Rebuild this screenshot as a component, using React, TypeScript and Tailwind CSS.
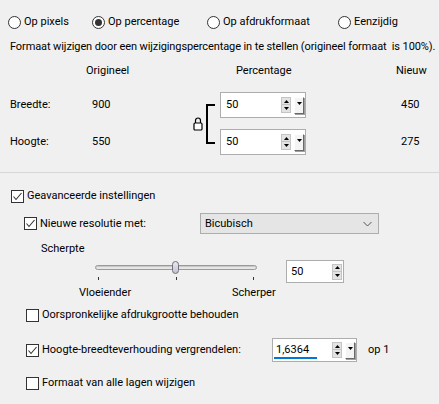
import React from 'react';

const Tri = ({ down }: { down?: boolean }) => (
  <svg width="5" height="3" viewBox="0 0 5 3">
    <path d={down ? 'M0 0H5L2.5 3Z' : 'M0 3H5L2.5 0Z'} fill="#000" />
  </svg>
);

const Radio = ({ label, checked, w }: { label: string; checked?: boolean; w: string }) => (
  <div className={`flex items-center ${w}`}>
    <span className="w-[13px] h-[13px] rounded-full border border-[#333] bg-white flex items-center justify-center">
      {checked && <span className="w-[7px] h-[7px] rounded-full bg-[#333]" />}
    </span>
    <span className="ml-[3px]">{label}</span>
  </div>
);

const Check = ({ label, checked }: { label: string; checked?: boolean }) => (
  <div className="flex items-center h-[14px]">
    <span className="w-[13px] h-[13px] border border-[#333] bg-white flex items-center justify-center">
      {checked && (
        <svg width="11" height="11" viewBox="0 0 11 11">
          <path d="M1.5 5.5L4 8.5L9.5 2" stroke="#333" strokeWidth="1.1" fill="none" />
        </svg>
      )}
    </span>
    <span className="ml-[3px]">{label}</span>
  </div>
);

// small up/down pair plus optional drop button
const Spinner = ({ drop = true }: { drop?: boolean }) => (
  <div className="flex items-center gap-[3px]">
    <div className="flex flex-col w-[10px]">
      <div className="h-[8px] bg-[#e3e3e3] border border-[#c4c4c4] flex items-center justify-center"><Tri /></div>
      <div className="h-[8px] bg-[#e3e3e3] border border-t-0 border-[#c4c4c4] flex items-center justify-center"><Tri down /></div>
    </div>
    {drop && (
      <div className="w-[10px] h-[17px] bg-[#f4f4f4] border border-t-[#fff] border-l-[#fff] border-r-[#696969] border-b-[#696969] shadow-[1px_1px_0_#a0a0a0] flex justify-center pt-[4px]">
        <Tri down />
      </div>
    )}
  </div>
);

const App: React.FC = () => {
  return (
    <div className="w-[439px] h-[404px] bg-[#f0f0f0] text-black text-[11px] leading-[14px] font-['Roboto',sans-serif] overflow-hidden">
      {/* mode radios */}
      <div className="pt-[15px] flex h-[29px] pl-[8px]">
        <Radio label="Op pixels" w="w-[84px]" />
        <Radio label="Op percentage" checked w="w-[115px]" />
        <Radio label="Op afdrukformaat" w="w-[131px]" />
        <Radio label="Eenzijdig" w="w-[90px]" />
      </div>

      <div className="mt-[11px] pl-[10px] whitespace-pre tracking-[-0.1px]">
        Formaat wijzigen door een wijzigingspercentage in te stellen (origineel formaat  is 100%).
      </div>

      {/* headers */}
      <div className="mt-[10px] flex h-[14px]">
        <span className="ml-[86px] w-[150px]">Origineel</span>
        <span className="w-[160px]">Percentage</span>
        <span>Nieuw</span>
      </div>

      {/* width / height */}
      <div className="mt-[14px] flex h-[63px]">
        <div className="ml-[10px] w-[82px] flex flex-col gap-[11px]">
          <div className="h-[26px] flex items-center">Breedte:</div>
          <div className="h-[26px] flex items-center">Hoogte:</div>
        </div>
        <div className="w-[98px] flex flex-col gap-[11px]">
          <div className="h-[26px] flex items-center">900</div>
          <div className="h-[26px] flex items-center">550</div>
        </div>
        <div className="w-[30px] flex items-center">
          <svg width="10" height="14" viewBox="0 0 10 14" className="ml-[3px]">
            <path d="M2.5 6V3.5a2.5 2.5 0 0 1 5 0V6" stroke="#000" strokeWidth="1.2" fill="none" />
            <rect x="1" y="6" width="8" height="7" rx="1" stroke="#000" strokeWidth="1.2" fill="#fff" />
          </svg>
          <div className="ml-[3px] w-[9px] h-[40px] border-[2px] border-r-0 border-black" />
        </div>
        <div className="w-[86px] flex flex-col gap-[11px]">
          <div className="h-[26px] border border-[#adadad] bg-white flex items-center pl-[5px] pr-[1px]">
            <span className="flex-1">50</span>
            <Spinner />
          </div>
          <div className="h-[26px] border border-[#adadad] bg-white flex items-center pl-[5px] pr-[1px]">
            <span className="flex-1">50</span>
            <Spinner />
          </div>
        </div>
        <div className="ml-[95px] flex flex-col gap-[11px]">
          <div className="h-[26px] flex items-center">450</div>
          <div className="h-[26px] flex items-center">275</div>
        </div>
      </div>

      <div className="mt-[17px] border-t border-[#d7d7d7]" />

      {/* advanced */}
      <div className="mt-[16px] pl-[11px]">
        <Check label="Geavanceerde instellingen" checked />
      </div>

      <div className="mt-[10px] flex items-center h-[21px] pl-[24px]">
        <div className="w-[176px]">
          <Check label="Nieuwe resolutie met:" checked />
        </div>
        <div className="w-[179px] h-[21px] bg-[#e5e5e5] border border-[#adadad] flex items-center pl-[4px] pr-[6px]">
          <span className="flex-1">Bicubisch</span>
          <svg width="9" height="6" viewBox="0 0 9 6">
            <path d="M0.5 1L4.5 5L8.5 1" stroke="#555" strokeWidth="1" fill="none" />
          </svg>
        </div>
      </div>

      <div className="mt-[8px] pl-[41px] h-[14px]">Scherpte</div>

      <div className="mt-[4px] flex h-[23px]">
        <div className="ml-[95px] w-[162px] relative">
          <div className="mt-[5px] h-[5px] rounded-full border border-[#9a9a9a] bg-[#e6e6e6] shadow-[inset_0_1px_0_#c8c8c8]" />
          <div className="absolute left-[77px] top-[1px] w-[7px] h-[13px] rounded-full border border-[#6f6f7a] bg-gradient-to-b from-[#e8e8f2] to-[#c2c2d2]" />
          <div className="mt-[7px] flex justify-between px-[3px]">
            <span className="w-px h-[3px] bg-[#333]" />
            <span className="w-px h-[3px] bg-[#333]" />
            <span className="w-px h-[3px] bg-[#333]" />
          </div>
        </div>
        <div className="ml-[29px] w-[58px] h-[23px] border border-[#adadad] bg-white flex items-center pl-[4px] pr-[1px]">
          <span className="flex-1">50</span>
          <Spinner drop={false} />
        </div>
      </div>

      <div className="mt-[3px] flex h-[14px]">
        <span className="ml-[79px] w-[153px]">Vloeiender</span>
        <span>Scherper</span>
      </div>

      <div className="mt-[8px] pl-[26px]">
        <Check label="Oorspronkelijke afdrukgrootte behouden" />
      </div>

      <div className="mt-[16px] flex items-center h-[24px] pl-[26px]">
        <div className="w-[246px]">
          <Check label="Hoogte-breedteverhouding vergrendelen:" checked />
        </div>
        <div className="relative w-[85px] h-[24px] border border-[#adadad] bg-white flex items-center pl-[3px] pr-[1px]">
          <span className="flex-1">1,6364</span>
          <Spinner />
          <div className="absolute left-[1px] bottom-[2px] w-[43px] h-[2px] bg-[#0078d7]" />
        </div>
        <span className="ml-[11px]">op 1</span>
      </div>

      <div className="mt-[14px] pl-[26px]">
        <Check label="Formaat van alle lagen wijzigen" />
      </div>
    </div>
  );
};

export default App;
